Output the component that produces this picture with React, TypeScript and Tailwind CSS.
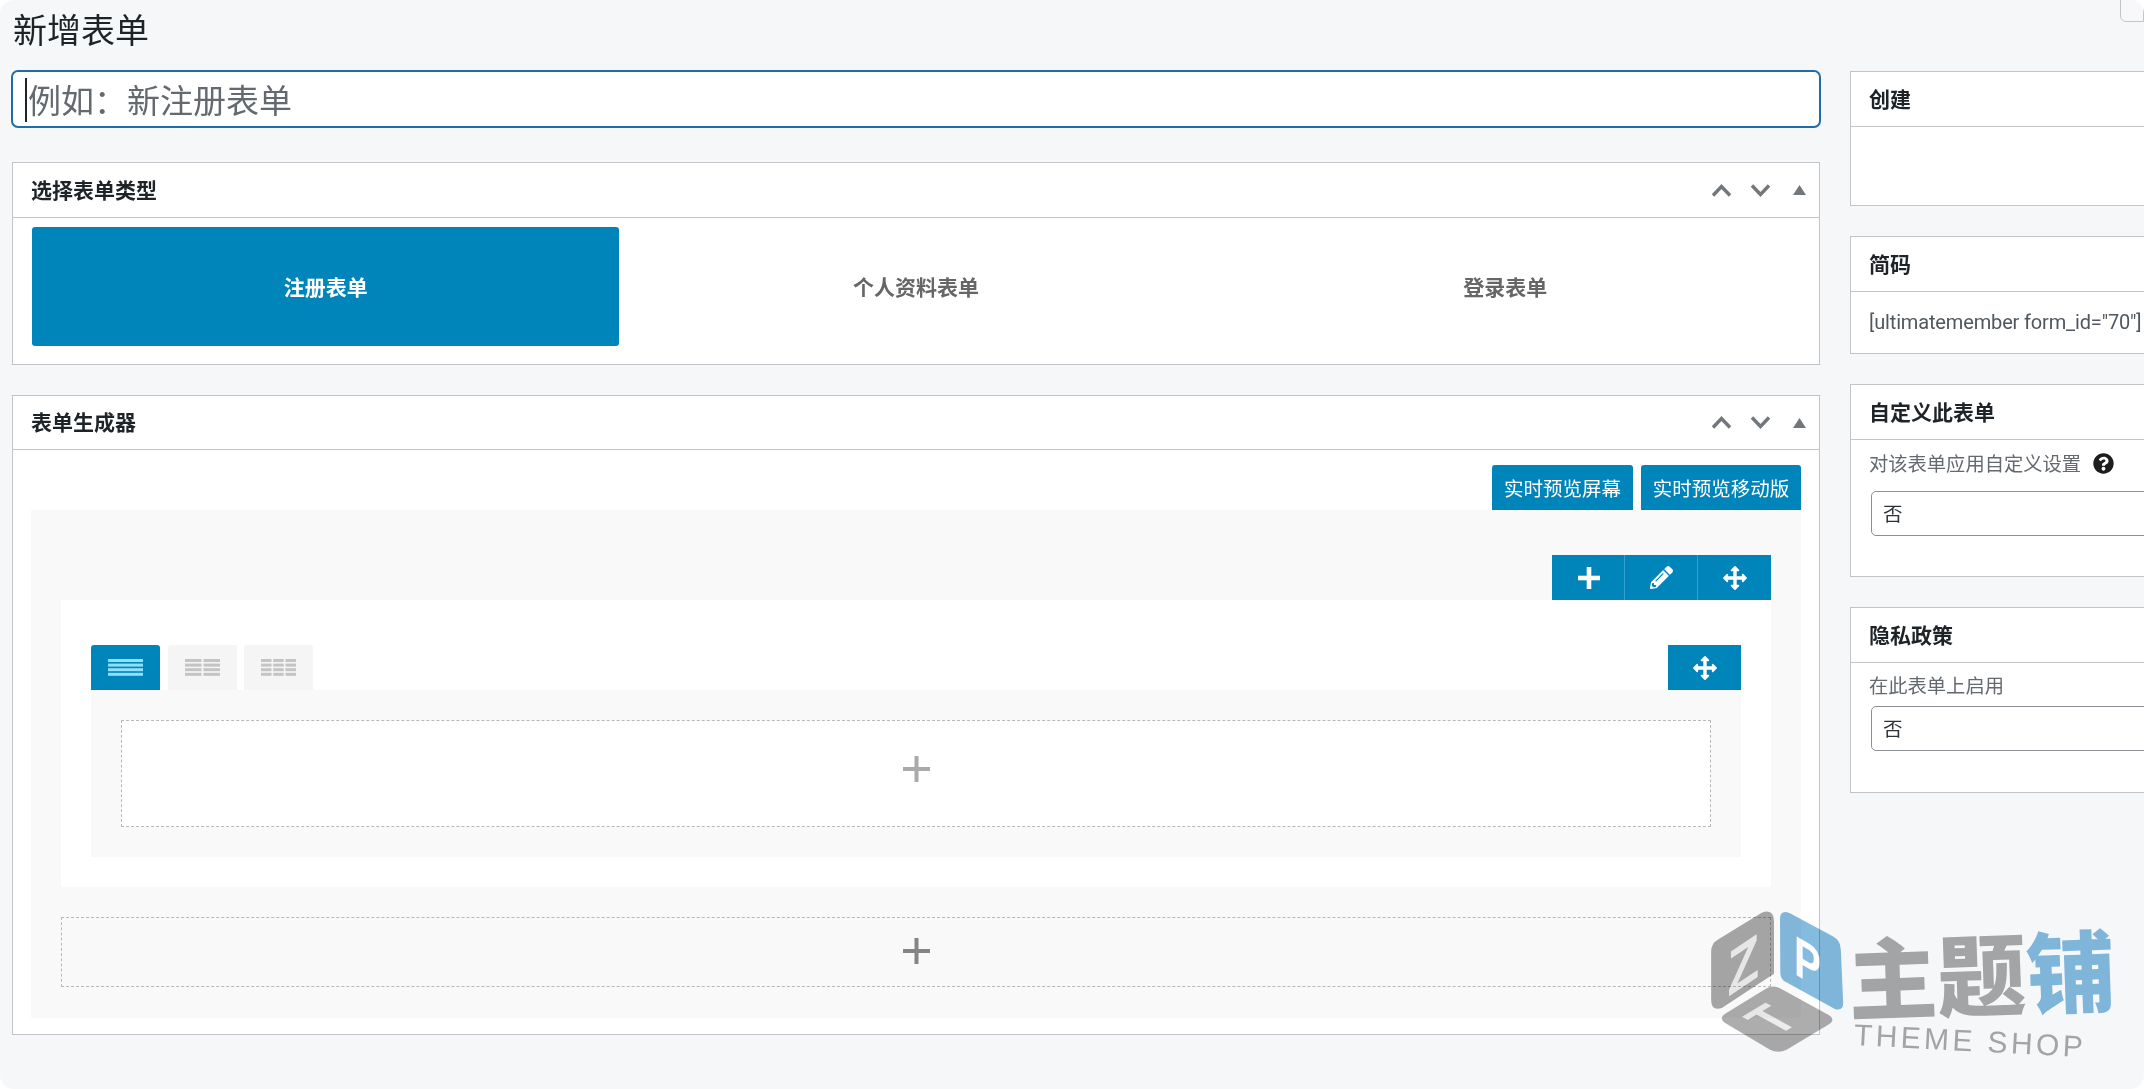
import React from "react";
import { FaPencilAlt, FaQuestionCircle } from "react-icons/fa";

function Controls() {
  return (
    <div className="flex items-center h-full">
      <span className="w-[39px] flex justify-center">
        <svg width="21" height="13" viewBox="0 0 21 13"><polyline points="2,11.5 10.5,2.5 19,11.5" fill="none" stroke="#72777c" strokeWidth="3.4" /></svg>
      </span>
      <span className="w-[39px] flex justify-center">
        <svg width="21" height="13" viewBox="0 0 21 13"><polyline points="2,1.5 10.5,10.5 19,1.5" fill="none" stroke="#72777c" strokeWidth="3.4" /></svg>
      </span>
      <span className="w-[39px] flex justify-center">
        <svg width="13" height="10" viewBox="0 0 13 10"><polygon points="6.5,0 13,10 0,10" fill="#72777c" /></svg>
      </span>
    </div>
  );
}

function Header({ title, controls, short }: { title: string; controls?: boolean; short?: boolean }) {
  return (
    <div className={`${short ? "h-[54px]" : "h-[55px]"} border-b border-[#c3c4c7] flex items-center justify-between pl-[18px]`}>
      <h2 className="text-[21px] font-bold text-[#1d2327] leading-none -translate-y-px">{title}</h2>
      {controls && <Controls />}
    </div>
  );
}

function Lines({ cols, color }: { cols: number; color: string }) {
  const w = cols === 1 ? 35 : cols === 2 ? 16.5 : 10.5;
  const step = cols === 1 ? 35 : cols === 2 ? 18.5 : 12.25;
  const cells = Array.from({ length: cols }, (_, i) => i);
  return (
    <svg width="35" height="17" viewBox="0 0 35 17">
      {cells.map((c) =>
        [0, 4.6, 9.2, 13.8].map((y) => (
          <rect key={`${c}-${y}`} x={c * step} y={y} width={w} height="3" fill={color} />
        ))
      )}
    </svg>
  );
}

function Plus({ color, thick }: { color: string; thick: number }) {
  return (
    <svg width="27" height="26" viewBox="0 0 27 26">
      <rect x={13.5 - thick / 2} y="0" width={thick} height="26" fill={color} />
      <rect x="0" y={13 - thick / 2} width="27" height={thick} fill={color} />
    </svg>
  );
}

function Move() {
  return (
    <svg width="24" height="24" viewBox="0 0 1792 1792" fill="#ffffff">
      <path d="M1792 896q0 26-19 45l-256 256q-19 19-45 19t-45-19-19-45v-128h-384v384h128q26 0 45 19t19 45-19 45l-256 256q-19 19-45 19t-45-19l-256-256q-19-19-19-45t19-45 45-19h128v-384h-384v128q0 26-19 45t-45 19-45-19l-256-256q-19-19-19-45t19-45l256-256q19-19 45-19t45 19 19 45v128h384v-384h-128q-26 0-45-19t-19-45 19-45l256-256q19-19 45-19t45 19l256 256q19 19 19 45t-19 45-45 19h-128v384h384v-128q0-26 19-45t45-19 45 19l256 256q19 19 19 45z" />
    </svg>
  );
}

function SideSelect() {
  return (
    <div className="ml-[2px] h-[45px] w-[400px] border border-[#8c8f94] rounded-[5px] bg-white flex items-center pl-[11px] text-[19.5px] text-[#2c3338]">
      <span className="-translate-y-px">否</span>
    </div>
  );
}

function Logo() {
  return (
    <div className="absolute left-[1700px] top-[905px] w-[420px] h-[170px] mix-blend-multiply pointer-events-none">
      <svg className="absolute left-[10px] top-[5px]" width="135" height="143" viewBox="180 90 405 430">
        <path d="M335 98 Q372 85 372 125 L372 282 L215 385 Q183 395 183 360 L183 215 Q183 190 205 178 Z" fill="#a8a8a8" />
        <path d="M390 115 Q392 88 420 100 L550 170 Q572 182 573 210 L580 370 Q580 395 555 388 L405 305 Q392 298 391 280 Z" fill="#84bbde" />
        <path d="M350 325 Q370 315 390 325 L535 405 Q560 420 535 435 L410 510 Q385 522 360 510 L225 430 Q205 415 225 402 Z" fill="#adadad" />
        <text transform="matrix(0.82,-0.55,0,1,232,352)" fontFamily="'Liberation Sans',sans-serif" fontWeight="700" fontSize="190" fill="#ececec">Z</text>
        <text transform="matrix(0.72,0.42,0,1,432,282)" fontFamily="'Liberation Sans',sans-serif" fontWeight="700" fontSize="170" fill="#ffffff">P</text>
        <text transform="matrix(1,-0.6,1.28,0.7,380,470)" fontFamily="'Liberation Sans',sans-serif" fontWeight="700" fontSize="120" fill="#ececec">T</text>
      </svg>
      <div className="absolute left-[148px] top-[28px] flex items-center -rotate-2 text-[89px] leading-[76px] font-black whitespace-nowrap">
        <span className="text-[#a9a9a9]">主题</span>
        <span className="text-[#84bbde]">铺</span>
      </div>
      <div className="absolute left-[154px] top-[113px] rotate-[3deg] origin-left text-[30px] leading-[34px] tracking-[3.4px] text-[#a9a9a9] whitespace-nowrap font-['Liberation_Sans',sans-serif]">
        THEME SHOP
      </div>
    </div>
  );
}

export default function App() {
  return (
    <div className="relative h-[1089px] w-full overflow-hidden bg-white font-['Noto_Sans_CJK_SC',sans-serif]">
      <div className="relative h-full w-full rounded-[14px] bg-[#f6f7f9] flex items-start pl-[12px] pt-[9px] overflow-hidden">
        <div className="absolute right-0 top-[-4px] w-[24px] h-[26px] border border-[#c3c4c7] rounded-bl-[6px] bg-[#f8f8fa]" />

        <main className="w-[1808px] shrink-0">
          <h1 className="pl-px text-[34px] leading-[40px] font-normal text-[#1d2327]">新增表单</h1>

          <div className="relative mt-[21px] -mx-px">
            <input
              readOnly
              placeholder={"例如\uFF1A新注册表单"}
              className="block w-full h-[58px] rounded-[7px] border-2 border-[#1f6ca8] bg-white pl-[15px] text-[33px] text-[#1d2327] outline-none placeholder:text-[#646970] caret-transparent"
            />
            <span className="absolute left-[14px] top-[8px] h-[44px] w-[2px] bg-[#1d2327]" />
          </div>

          <section className="mt-[34px] h-[203px] border border-[#c3c4c7] bg-white">
            <Header title="选择表单类型" controls />
            <div className="grid grid-cols-3 pl-[19px] pr-[19px] pt-[9px]">
              <div className="h-[119px] mr-[2px] rounded-[3px] bg-[#0085ba] flex items-center justify-center text-[21px] font-bold text-white">注册表单</div>
              <div className="h-[119px] flex items-center justify-center text-[21px] font-bold text-[#666666]">个人资料表单</div>
              <div className="h-[119px] flex items-center justify-center text-[21px] font-bold text-[#666666]">登录表单</div>
            </div>
          </section>

          <section className="mt-[30px] h-[640px] border border-[#c3c4c7] bg-white">
            <Header title="表单生成器" controls short />
            <div className="pl-[18px] pr-[18px] pt-[15px]">
              <div className="flex justify-end gap-[8px]">
                <button className="h-[45px] w-[141px] rounded-t-[3px] bg-[#0085ba] text-[19.5px] text-white">实时预览屏幕</button>
                <button className="h-[45px] w-[160px] rounded-t-[3px] bg-[#0085ba] text-[19.5px] text-white">实时预览移动版</button>
              </div>

              <div className="h-[508px] bg-[#f9f9f9] px-[30px] pt-[45px]">
                <div className="flex justify-end h-[45px]">
                  <div className="flex bg-[#0085ba] divide-x divide-[#3a9fca]">
                    <div className="w-[73px] pl-px flex items-center justify-center">
                      <svg width="22" height="22" viewBox="0 0 22 22"><rect x="8.7" y="0" width="4.6" height="22" fill="#fff" /><rect x="0" y="8.7" width="22" height="4.6" fill="#fff" /></svg>
                    </div>
                    <div className="w-[73px] flex items-center justify-center text-white"><FaPencilAlt size={23} /></div>
                    <div className="w-[73px] flex items-center justify-center"><Move /></div>
                  </div>
                </div>

                <div className="h-[287px] bg-white px-[30px] pt-[45px]">
                  <div className="flex items-stretch justify-between h-[45px]">
                    <div className="flex gap-[7.5px]">
                      <div className="w-[69px] rounded-t-[3px] bg-[#0085ba] flex items-center justify-center"><Lines cols={1} color="#8fe0fb" /></div>
                      <div className="w-[69px] rounded-t-[3px] bg-[#f5f5f5] flex items-center justify-center"><Lines cols={2} color="#c4c4c4" /></div>
                      <div className="w-[69px] rounded-t-[3px] bg-[#f5f5f5] flex items-center justify-center"><Lines cols={3} color="#c4c4c4" /></div>
                    </div>
                    <div className="w-[73px] bg-[#0085ba] flex items-center justify-center"><Move /></div>
                  </div>
                  <div className="h-[167px] bg-[#f9f9f9] p-[30px]">
                    <div className="h-[107px] pb-[10px] border border-dashed border-[#b8b8b8] bg-white flex items-center justify-center">
                      <Plus color="#aaaaaa" thick={4} />
                    </div>
                  </div>
                </div>

                <div className="mt-[30px] h-[70px] pb-[2px] border border-dashed border-[#b8b8b8] flex items-center justify-center">
                  <Plus color="#858585" thick={4} />
                </div>
              </div>
            </div>
          </section>
        </main>

        <aside className="ml-[30px] mt-[62px] w-[400px] shrink-0 flex flex-col gap-[30px]">
          <section className="h-[135px] border border-[#c3c4c7] bg-white">
            <Header title="创建" />
          </section>

          <section className="h-[118px] border border-[#c3c4c7] bg-white">
            <Header title="简码" />
            <div className="h-[62px] flex items-center pl-[18px] font-['Roboto',sans-serif] text-[20px] tracking-[-0.15px] text-[#50575e] whitespace-nowrap">
              <span className="-translate-y-px">[ultimatemember form_id="70"]</span>
            </div>
          </section>

          <section className="h-[193px] border border-[#c3c4c7] bg-white">
            <Header title="自定义此表单" />
            <div className="pl-[18px] pt-[12px]">
              <div className="flex items-center h-[24px] -translate-y-px text-[19.3px] text-[#646970]">
                对该表单应用自定义设置
                <FaQuestionCircle size={21} className="ml-[12px] text-[#1d1d1d]" />
              </div>
              <div className="mt-[15px]"><SideSelect /></div>
            </div>
          </section>

          <section className="h-[186px] border border-[#c3c4c7] bg-white">
            <Header title="隐私政策" />
            <div className="pl-[18px] pt-[11px]">
              <div className="h-[24px] flex items-center -translate-y-px text-[19.3px] text-[#646970]">在此表单上启用</div>
              <div className="mt-[8px]"><SideSelect /></div>
            </div>
          </section>
        </aside>

        <Logo />
      </div>
    </div>
  );
}
